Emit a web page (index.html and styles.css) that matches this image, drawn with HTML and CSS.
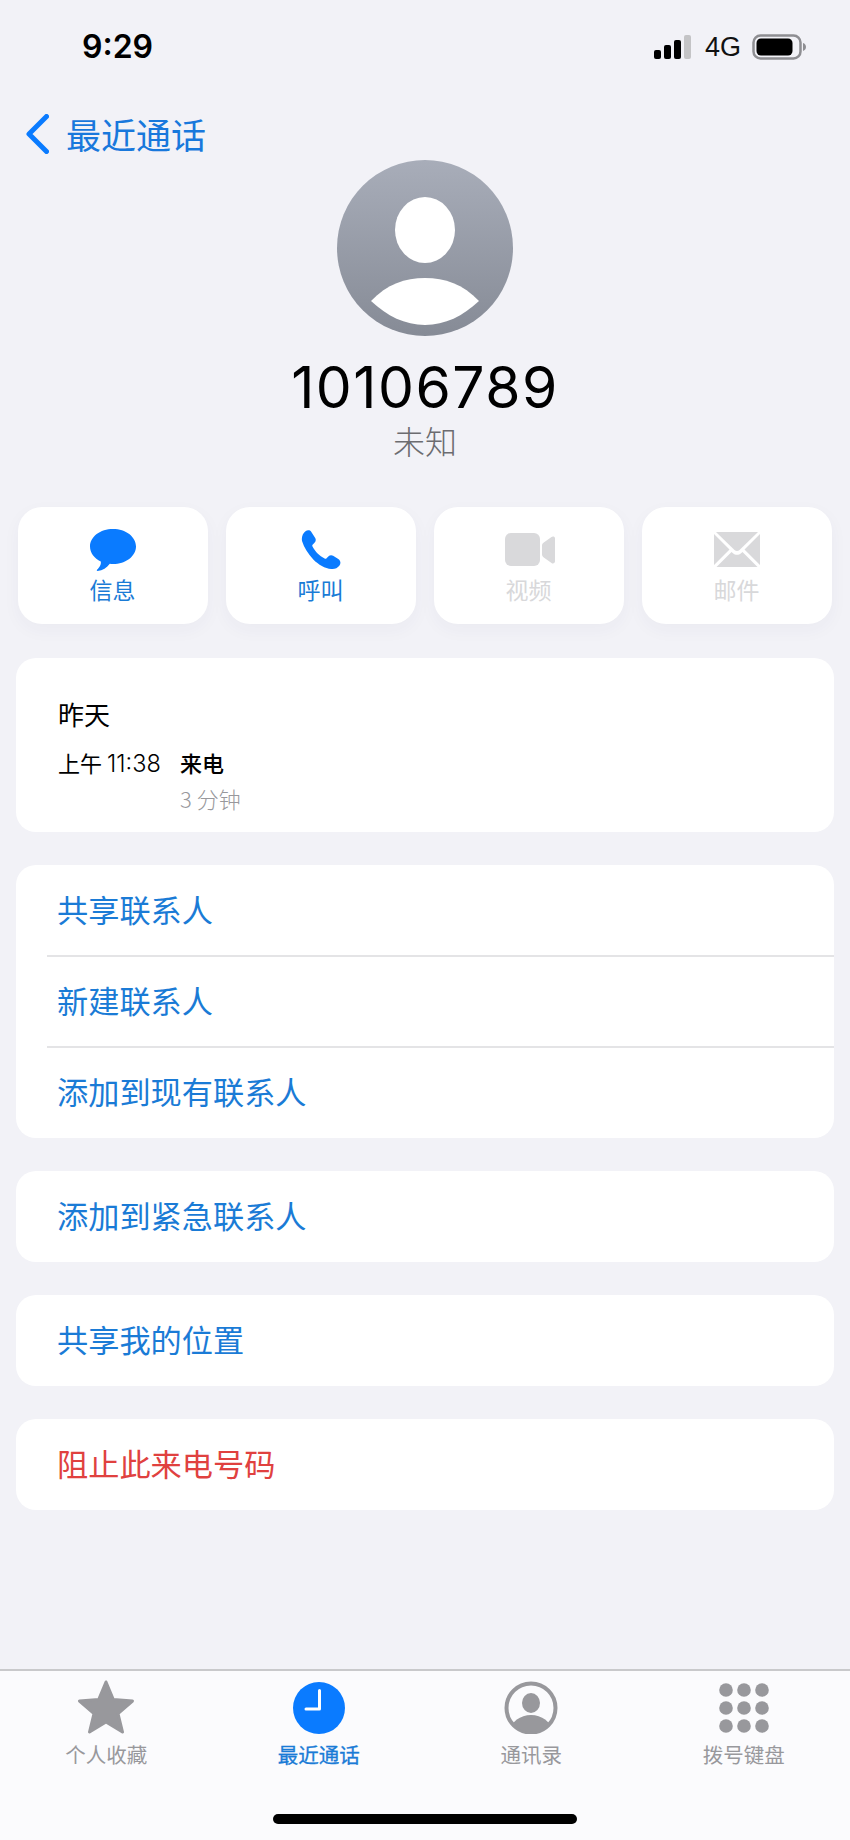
FILE: index.html
```html
<!DOCTYPE html>
<html lang="zh-CN">
<head>
<meta charset="utf-8">
<title>最近通话</title>
<link rel="stylesheet" href="styles.css">
</head>
<body>
<div class="app">
  <header class="status">
    <span class="time">9:29</span>
    <div class="status-right">
      <svg class="signal" width="38" height="24" viewBox="0 0 38 24"><rect x="0" y="15" width="7" height="9" rx="2" fill="#000"/><rect x="10" y="10" width="7" height="14" rx="2" fill="#000"/><rect x="20" y="5" width="7" height="19" rx="2" fill="#000"/><rect x="30" y="0" width="7" height="24" rx="2" fill="#c4c4c6"/></svg>
      <span class="net">4G</span>
      <svg class="battery" width="54" height="26" viewBox="0 0 54 26"><rect x="1.500" y="1.500" width="47" height="23" rx="7" fill="none" stroke="#8e8e92" stroke-width="2.500"/><rect x="4.500" y="4.500" width="36" height="17" rx="4.500" fill="#000"/><path d="M51 9c1.800.6 3 2.200 3 4s-1.200 3.400-3 4z" fill="#8e8e92"/></svg>
    </div>
  </header>
  <nav class="back">
    <svg width="23" height="40" viewBox="0 0 23 40"><path d="M20.500 2.500 3 20l17.500 17.500" fill="none" stroke="#0a7bff" stroke-width="5" stroke-linecap="round" stroke-linejoin="round"/></svg>
    <span>最近通话</span>
  </nav>
  <section class="hero">
    <svg class="avatar" width="176" height="176" viewBox="0 0 176 176">
      <defs><linearGradient id="ag" x1="0" y1="0" x2="0" y2="1"><stop offset="0" stop-color="#a8adb9"/><stop offset="1" stop-color="#868b96"/></linearGradient></defs>
      <circle cx="88" cy="88" r="88" fill="url(#ag)"/>
      <ellipse cx="88" cy="70" rx="30" ry="33" fill="#fff"/>
      <path d="M34 141C50 124 68 118 88 118s38 6 54 23c-16 15-34 24-54 24s-38-9-54-24z" fill="#fff"/>
    </svg>
    <h1 class="number">10106789</h1>
    <p class="sub">未知</p>
  </section>
  <section class="actions">
    <button class="action">
      <svg width="46" height="42" viewBox="0 0 46 42"><path d="M23 0C10.300 0 0 7.800 0 17.500c0 6.300 4.300 11.800 10.800 14.900.6 3-1.500 6.300-3.800 8.300-.5.500-.2 1.200.5 1.200 5.300-.4 9.300-3 12.300-7.100 1.100.2 2.100.2 3.200.2 12.700 0 23-7.800 23-17.500S35.700 0 23 0z" fill="#0a7bff"/></svg>
      <span>信息</span>
    </button>
    <button class="action">
      <svg width="40" height="40" viewBox="0 0 40 40"><path d="M4.500 1.200C6.300-.2 9-.2 10.200 1.700l4 6.300c1 1.600.6 3.500-.7 4.800l-1.700 1.600c-.6.600-.7 1.300-.3 2 1.500 2.800 3.200 5 5.100 7 2 2 4.300 3.700 7 5.100.7.400 1.400.3 2-.3l1.700-1.700c1.300-1.300 3.200-1.700 4.800-.7l5.200 3.300c2.400 1.500 2.800 4.500 1 6.600-1.800 2.200-4.500 3.700-8 3.300-6.300-.7-12.800-4.400-18-9.600C7 24 3 17.400 1.200 11.600.1 7.500 1.600 3.400 4.500 1.200z" fill="#0a7bff"/></svg>
      <span>呼叫</span>
    </button>
    <button class="action off">
      <svg class="video" width="50" height="34" viewBox="0 0 50 34"><rect x="0" y="0" width="35" height="33" rx="6" fill="#d9d9db"/><path d="M37 12.500c0-1 .4-1.800 1.100-2.400l8.400-6c1.200-1 3.500-.5 3.500 1.300v23.200c0 1.800-2.300 2.300-3.500 1.300l-8.400-6c-.7-.6-1.100-1.400-1.100-2.400z" fill="#d9d9db"/></svg>
      <span>视频</span>
    </button>
    <button class="action off">
      <svg width="46" height="36" viewBox="0 0 46 36"><path d="M2 0h42L25.500 18c-1.500 1.400-3.500 1.400-5 0z" fill="#d9d9db"/><path d="M0 2v31l15.500-15.500zM46 2v31L30.500 17.500zM2.500 35l15-15 1.500 1.200c2.300 2 5.700 2 8 0l1.500-1.200 15 15z" fill="#d9d9db"/></svg>
      <span>邮件</span>
    </button>
  </section>
  <section class="card log">
    <p class="log-date">昨天</p>
    <div class="log-row">
      <span class="log-time">上午<span class="log-clock">11:38</span></span>
      <div class="log-detail">
        <span class="log-type">来电</span>
        <span class="log-dur">3 分钟</span>
      </div>
    </div>
  </section>
  <section class="card list">
    <a class="row">共享联系人</a>
    <a class="row">新建联系人</a>
    <a class="row">添加到现有联系人</a>
  </section>
  <section class="card list"><a class="row">添加到紧急联系人</a></section>
  <section class="card list"><a class="row">共享我的位置</a></section>
  <section class="card list"><a class="row danger">阻止此来电号码</a></section>
  <footer class="tabbar">
    <div class="tabs">
      <div class="tab">
        <svg width="58" height="54" viewBox="0 0 58 54"><path d="M29 2 36.300 19.500 55.500 21 41 33.500 45.500 52 29 42 12.500 52 17 33.500 2.500 21 21.700 19.500z" fill="#98989c" stroke="#98989c" stroke-width="3" stroke-linejoin="round"/></svg>
        <span>个人收藏</span>
      </div>
      <div class="tab on">
        <svg width="52" height="54" viewBox="0 0 52 54"><circle cx="26" cy="28" r="26" fill="#0a7bff"/><path d="M26.500 10.500v18.500H13" fill="none" stroke="#fff" stroke-width="3" stroke-linecap="round" stroke-linejoin="round"/></svg>
        <span>最近通话</span>
      </div>
      <div class="tab">
        <svg width="54" height="54" viewBox="0 0 54 54"><defs><clipPath id="cc"><circle cx="27" cy="28" r="24"/></clipPath></defs><circle cx="27" cy="28" r="24.500" fill="none" stroke="#98989c" stroke-width="4"/><ellipse cx="27" cy="23" rx="9" ry="10" fill="#98989c"/><ellipse cx="27" cy="50" rx="20" ry="15" fill="#98989c" clip-path="url(#cc)"/></svg>
        <span>通讯录</span>
      </div>
      <div class="tab">
        <svg width="50" height="54" viewBox="0 0 50 54" fill="#98989c"><circle cx="7" cy="10" r="6.800"/><circle cx="25" cy="10" r="6.800"/><circle cx="43" cy="10" r="6.800"/><circle cx="7" cy="28" r="6.800"/><circle cx="25" cy="28" r="6.800"/><circle cx="43" cy="28" r="6.800"/><circle cx="7" cy="46" r="6.800"/><circle cx="25" cy="46" r="6.800"/><circle cx="43" cy="46" r="6.800"/></svg>
        <span>拨号键盘</span>
      </div>
    </div>
    <div class="home"></div>
  </footer>
</div>
</body>
</html>
```
FILE: styles.css
```css
* { box-sizing: border-box; margin: 0; padding: 0; }
html, body { height: 100%; }
body {
  background: #f2f2f7;
  font-family: Inter, "Noto Sans CJK SC", sans-serif;
  overflow: hidden;
}
.app { height: 1840px; display: flex; flex-direction: column; }
.status {
  height: 108px;
  padding: 24px 44px 0 82px;
  display: flex;
  justify-content: space-between;
  align-items: flex-start;
}
.time { font: 600 32px/46px Inter, sans-serif; color: #000; }
.status-right { display: flex; align-items: center; height: 46px; }
.signal { margin-right: 13px; }
.net { font: 400 27px/46px "Liberation Sans", sans-serif; color: #111; width: 47px; }
.back {
  height: 52px;
  padding: 0 0 0 26px;
  display: flex;
  align-items: center;
  gap: 17px;
  font: 400 35px/50px "Noto Sans CJK SC", sans-serif;
  color: #1878dc;
}
.hero { display: flex; flex-direction: column; align-items: center; }
.number { font: 400 57px/64px Inter, "Liberation Sans", sans-serif; letter-spacing: 1.500px; color: #000; margin-top: 20px; }
.sub { font: 300 32px/40px "Noto Sans CJK SC", sans-serif; color: #6c6c70; }
.actions {
  margin-top: 47px;
  padding: 0 18px;
  display: grid;
  grid-template-columns: repeat(4, 1fr);
  gap: 18px;
}
.action {
  height: 117px;
  border: 0;
  border-radius: 24px;
  background: #fff;
  box-shadow: 0 6px 18px rgba(60, 60, 100, .04);
  display: flex;
  flex-direction: column;
  align-items: center;
  justify-content: flex-start;
  padding: 22px 1px 0 0;
  color: #1a7bd6;
  font: 400 23px/32px "Noto Sans CJK SC", sans-serif;
}
.action svg { height: 42px; }
.action .video { margin-left: 3px; }
.action span { margin-top: 2px; }
.action.off { color: #d8d8da; }
.card { background: #fff; border-radius: 20px; margin: 0 16px; overflow: hidden; }
.log { margin-top: 34px; height: 174px; padding: 38px 42px 0; }
.log-date { font: 400 26px/36px "Noto Sans CJK SC", sans-serif; color: #000; }
.log-row { display: flex; margin-top: 12px; font: 400 22px/36px "Noto Sans CJK SC", Inter, sans-serif; color: #000; }
.log-time { width: 122px; font-weight: 400; white-space: nowrap; }
.log-clock { font: 350 23.500px/36px Inter, sans-serif; margin-left: 5px; }
.log-detail { display: flex; flex-direction: column; }
.log-type { font-weight: 500; }
.log-dur { color: #98989c; font-weight: 300; }
.list { margin-top: 33px; flex: none; }
.row {
  display: block;
  height: 91px;
  margin-left: 31px;
  padding-left: 10px;
  font: 400 31.200px/86px "Noto Sans CJK SC", sans-serif;
  color: #1a7bd6;
  border-top: 2px solid #e4e4e6;
}
.row:first-child { border-top: 0; line-height: 88px; }
.row:first-child:not(:last-child) { height: 90px; }
.row:last-child:not(:first-child) { height: 92px; }
.danger { color: #e0413f; }
.tabbar {
  margin-top: auto;
  height: 171px;
  background: #fbfbfd;
  border-top: 2px solid #c9c9cb;
  display: flex;
  flex-direction: column;
}
.tabs { display: grid; grid-template-columns: repeat(4, 1fr); padding-top: 9px; }
.tab {
  display: flex;
  flex-direction: column;
  align-items: center;
  color: #98989c;
  font: 400 20.500px/30px "Noto Sans CJK SC", sans-serif;
}
.tab span { margin-top: 5px; }
.tab.on { color: #1a7bd6; -webkit-text-stroke: .3px #1a7bd6; }
.home { width: 304px; height: 10px; border-radius: 5px; background: #000; margin: 45px auto 0; }
```
